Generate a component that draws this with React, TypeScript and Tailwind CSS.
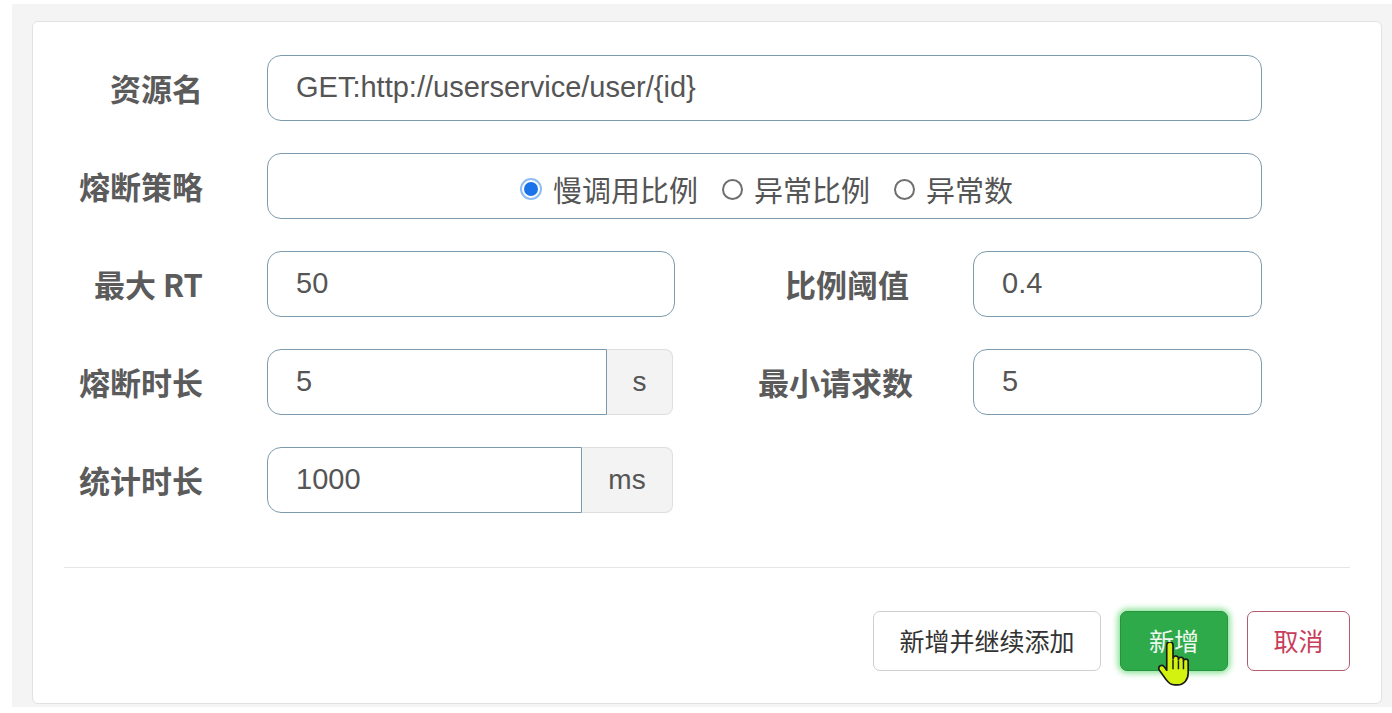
import type { ReactNode } from "react";

const LABEL = "shrink-0 text-right text-[31px] font-bold text-[#5b5b5b] [font-family:'Noto_Sans_CJK_SC',sans-serif]";
const INPUT_BOX = "flex h-[66px] items-center rounded-[14px] border border-[#7d9bae] bg-white pl-[28px] text-[29px] text-[#555] [font-family:'Liberation_Sans','Noto_Sans_CJK_SC',sans-serif]";

function Row({ children }: { children: ReactNode }) {
  return <div className="flex h-[66px] items-center">{children}</div>;
}

function Label({ text, width = "w-[170px]" }: { text: string; width?: string }) {
  return <div className={`${LABEL} ${width} mr-[64px]`}>{text}</div>;
}

function AddonInput({ value, unit, addonWidth }: { value: string; unit: string; addonWidth: string }) {
  return (
    <div className="flex h-[66px] w-[406px] [font-family:'Liberation_Sans',sans-serif]">
      <div className="flex flex-1 items-center rounded-l-[14px] border border-[#7d9bae] bg-white pl-[28px] text-[29px] text-[#555]">
        {value}
      </div>
      <div
        className={`flex ${addonWidth} items-center justify-center rounded-r-[8px] border border-l-0 border-[#dedede] bg-[#f3f3f3] text-[28px] text-[#555]`}
      >
        {unit}
      </div>
    </div>
  );
}

function Radio({ checked, label }: { checked?: boolean; label: string }) {
  return (
    <div className="flex items-center gap-[11px]">
      {checked ? (
        <span className="flex h-[22px] w-[22px] items-center justify-center rounded-full border-2 border-[#8fbdf2] bg-white">
          <span className="h-[14px] w-[14px] rounded-full bg-[#1a73e8]" />
        </span>
      ) : (
        <span className="h-[21px] w-[21px] rounded-full border-2 border-[#6e6e6e] bg-white" />
      )}
      <span className="translate-y-[1px] text-[29px] text-[#555] [font-family:'Noto_Sans_CJK_SC',sans-serif]">
        {label}
      </span>
    </div>
  );
}

function HandCursor() {
  return (
    <svg
      className="pointer-events-none absolute left-[36px] top-[30px]"
      width="32"
      height="46"
      viewBox="0 0 30 44"
    >
      <path
        d="M9 3c0-1.7 1.3-3 3-3s3 1.3 3 3v13c0-1.5 1.2-2.6 2.6-2.6s2.6 1.1 2.6 2.6v1c0-1.4 1.1-2.4 2.4-2.4s2.4 1 2.4 2.4v1.5c0-1.3 1-2.2 2.2-2.2s2.3.9 2.3 2.2V30c0 6-4 11-10 11h-3c-4 0-6-2-8-5L2 27c-1-1.8-.6-3.4.8-4.2 1.4-.8 3-.3 4 1.2L9 27V3z"
        fill="#d3f20f"
        stroke="#1a1a1a"
        strokeWidth="1.6"
        strokeLinejoin="round"
      />
      <path d="M15 17v9M20.2 18v8M25 19v7" stroke="#1a1a1a" strokeWidth="1.4" />
    </svg>
  );
}

export default function App() {
  return (
    <div className="h-[713px] w-[1392px] bg-white pl-[12px] pt-[4px]">
      <div className="h-[703px] bg-[#f4f4f4] pl-[20px] pt-[17px]">
        <div className="w-[1350px] rounded-[6px] border border-[#e2e2e2] bg-white pb-[32px] pt-[33px]">
          <div className="flex flex-col gap-[32px]">
            <Row>
              <Label text="资源名" />
              <div className={`${INPUT_BOX} w-[995px]`}>GET:http://userservice/user/{"{id}"}</div>
            </Row>
            <Row>
              <Label text="熔断策略" />
              <div className="flex h-[66px] w-[995px] items-center justify-center rounded-[14px] border border-[#7d9bae] bg-white pl-[4px]">
                <div className="flex translate-y-[3px] items-center gap-[24px]">
                  <Radio checked label="慢调用比例" />
                  <Radio label="异常比例" />
                  <Radio label="异常数" />
                </div>
              </div>
            </Row>
            <Row>
              <Label text="最大 RT" />
              <div className={`${INPUT_BOX} w-[408px]`}>50</div>
              <Label text="比例阈值" width="w-[234px]" />
              <div className={`${INPUT_BOX} w-[289px]`}>0.4</div>
            </Row>
            <Row>
              <Label text="熔断时长" />
              <AddonInput value="5" unit="s" addonWidth="w-[66px]" />
              <div className="w-[2px]" />
              <Label text="最小请求数" width="w-[238px]" />
              <div className={`${INPUT_BOX} ml-[-4px] w-[289px]`}>5</div>
            </Row>
            <Row>
              <Label text="统计时长" />
              <AddonInput value="1000" unit="ms" addonWidth="w-[91px]" />
            </Row>
          </div>

          <div className="mx-[31px] mt-[54px] h-px bg-[#e6e6e6]" />

          <div className="mr-[31px] mt-[43px] flex justify-end gap-[19px] text-[25px] [font-family:'Noto_Sans_CJK_SC',sans-serif]">
            <button
              type="button"
              className="h-[60px] w-[228px] rounded-[7px] border border-[#cfcfcf] bg-white text-[#333]"
            >
              新增并继续添加
            </button>
            <button
              type="button"
              className="relative h-[60px] w-[108px] rounded-[7px] border border-[#28943f] bg-[#2eaa4a] text-[#eef8ef] shadow-[0_0_6px_2px_#7fe08d]"
            >
              新增
              <HandCursor />
            </button>
            <button
              type="button"
              className="h-[60px] w-[103px] rounded-[7px] border border-[#b45c6f] bg-white text-[#c73e5a]"
            >
              取消
            </button>
          </div>
        </div>
      </div>
    </div>
  );
}
